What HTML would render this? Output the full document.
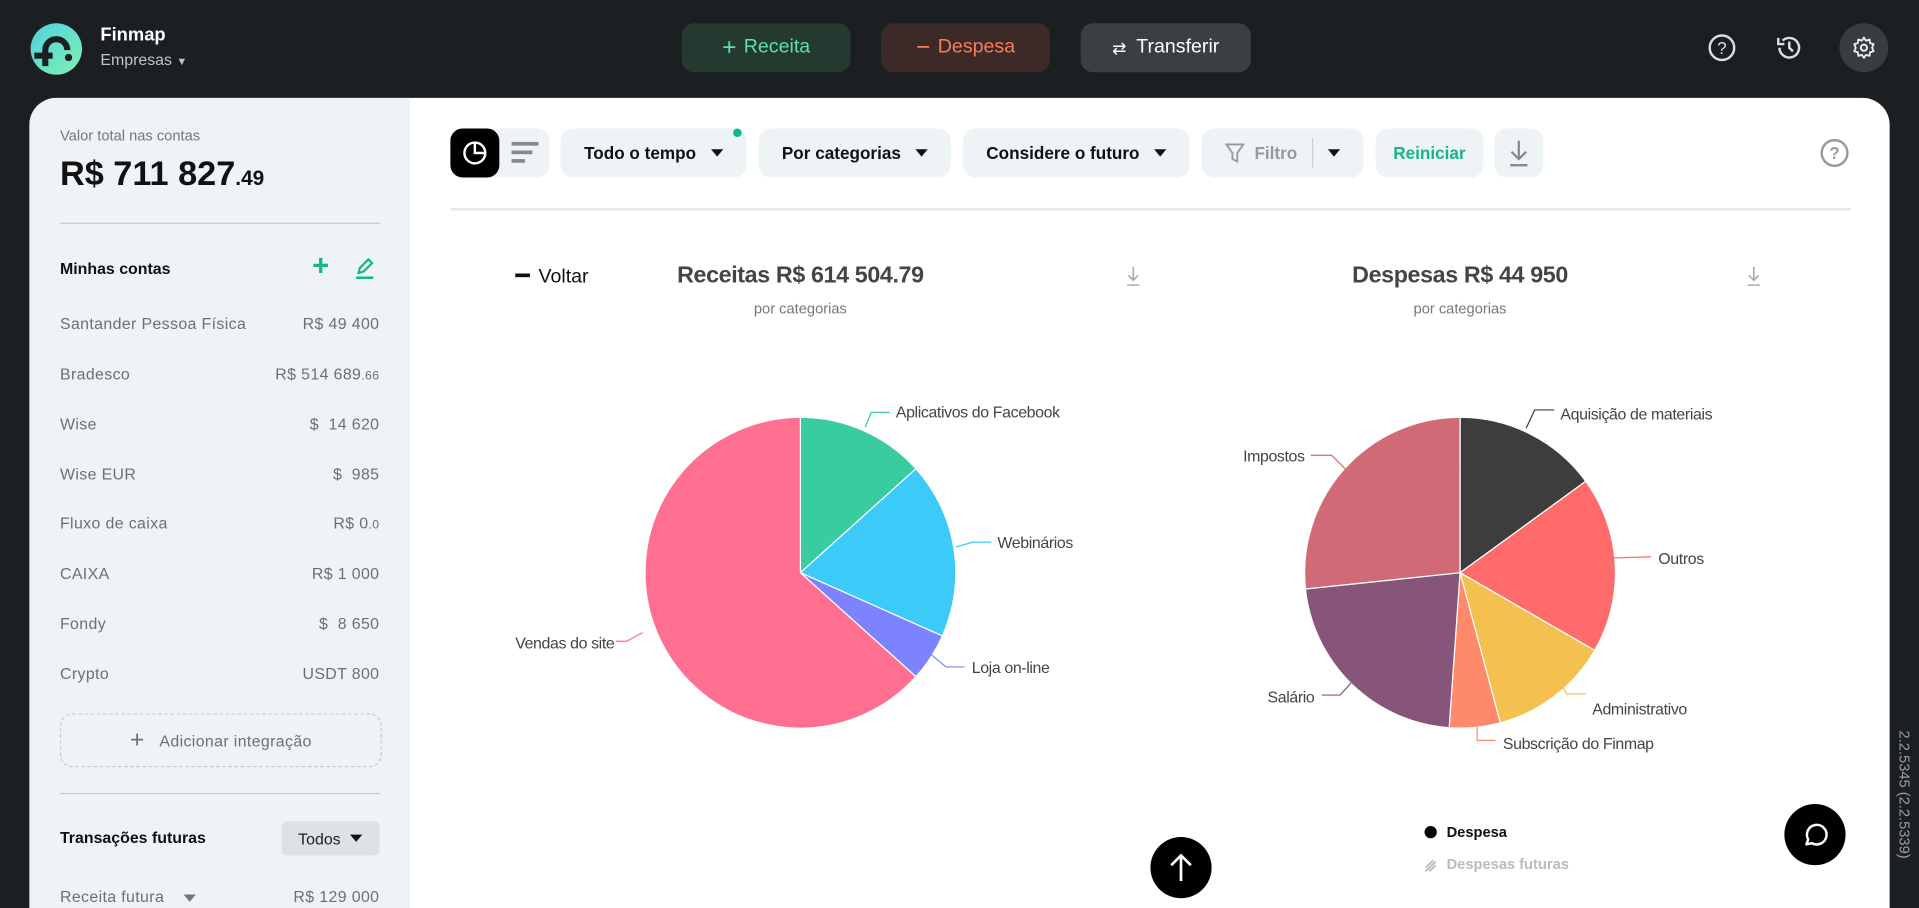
<!DOCTYPE html>
<html><head><meta charset="utf-8"><style>
*{margin:0;padding:0;box-sizing:border-box}
html,body{width:1919px;height:908px;overflow:hidden;background:#1b1f22;font-family:"Liberation Sans",Arial,sans-serif}
#w{position:absolute;left:0;top:0;width:1568px;height:742px;transform:scale(1.22385,1.22372);transform-origin:0 0;background:#1b1f22;overflow:hidden}
.a{position:absolute}
.btn{position:absolute;top:19px;height:40px;border-radius:10px;font-size:16px;display:flex;align-items:center;justify-content:center}
.tb{position:absolute;top:105px;height:40px;border-radius:10px;background:#eef3f6;font-size:14px;font-weight:bold;color:#111;display:flex;align-items:center;justify-content:center;gap:12px}
.tri{width:0;height:0;border-left:5px solid transparent;border-right:5px solid transparent;border-top:6px solid #111;display:inline-block}
.row{position:absolute;left:49px;width:261px;font-size:13px;color:#6b7075;display:flex;justify-content:space-between;letter-spacing:.3px}
</style></head><body><div id="w">
<svg class="a" style="left:24px;top:18px" width="44" height="44" viewBox="0 0 44 44"><defs><linearGradient id="g" x1="0" y1="0" x2="1" y2="1"><stop offset="0" stop-color="#4fd1e0"/><stop offset="1" stop-color="#7ff0b0"/></linearGradient></defs><circle cx="22" cy="22" r="21" fill="url(#g)"/><path d="M13 36V23a9 9 0 0 1 18 0" stroke="#1b1f22" stroke-width="5" fill="none"/><rect x="4" y="25" width="15" height="5" fill="#1b1f22"/><circle cx="32" cy="29" r="3" fill="#1b1f22"/></svg>
<div class="a" style="left:82px;top:20px;color:#fff;font-weight:bold;font-size:15px">Finmap</div>
<div class="a" style="left:82px;top:41px;color:#bfc3c6;font-size:13px">Empresas <span style="font-size:9px">▼</span></div>
<div class="btn" style="left:557px;width:138px;background:#24392f;color:#5fe0a6"><span style="font-size:20px;margin-right:6px">+</span>Receita</div>
<div class="btn" style="left:720px;width:138px;background:#3b2a27;color:#ff7a5c"><span style="font-size:20px;margin-right:6px">−</span>Despesa</div>
<div class="btn" style="left:883px;width:139px;background:#3c3f42;color:#fff"><span style="font-size:14px;margin-right:8px">⇄</span>Transferir</div>
<svg class="a" style="left:1395px;top:27px" width="24" height="24" viewBox="0 0 24 24"><circle cx="12" cy="12" r="10" stroke="#ddd" stroke-width="2" fill="none"/><text x="12" y="17" text-anchor="middle" font-size="14" fill="#ddd" font-family="Liberation Sans">?</text></svg>
<svg class="a" style="left:1450px;top:27px" width="24" height="24" viewBox="0 0 24 24"><path d="M4 12a8 8 0 1 0 2.5-5.8" stroke="#ddd" stroke-width="2" fill="none"/><path d="M3 4v5h5" stroke="#ddd" stroke-width="2" fill="none"/><path d="M12 7v5l3 3" stroke="#ddd" stroke-width="2" fill="none"/></svg>
<div class="a" style="left:1503px;top:19px;width:40px;height:40px;border-radius:50%;background:#3a3d40"></div>
<svg class="a" style="left:1513px;top:29px" width="20" height="20" viewBox="0 0 24 24"><circle cx="12" cy="12" r="3" stroke="#eee" stroke-width="2" fill="none"/><path d="M12 2l2 3 3.5-1 .5 3.5 3.5 1-1.5 3.5 1.5 3.5-3.5 1-.5 3.5-3.5-1-2 3-2-3-3.5 1-.5-3.5-3.5-1L4 12 2.5 8.5l3.5-1L6.5 4 10 5z" stroke="#eee" stroke-width="1.8" fill="none" stroke-linejoin="round"/></svg>
<div class="a" style="left:24px;top:80px;width:1520px;height:662px;background:#fff;border-radius:22px 22px 0 0;overflow:hidden">
<div class="a" style="left:0;top:0;width:311px;height:662px;background:#edf3f6"></div></div>
<div class="a" style="left:49px;top:104px;font-size:12px;color:#777">Valor total nas contas</div>
<div class="a" style="left:49px;top:126px;font-size:28px;font-weight:bold;color:#111">R$ 711 827<span style="font-size:17px">.49</span></div>
<div class="a" style="left:49px;top:182px;width:262px;height:1px;background:#c9ccce"></div>
<div class="a" style="left:49px;top:212px;font-size:13px;font-weight:bold;color:#111">Minhas contas</div>
<div class="a" style="left:255px;top:204px;font-size:24px;color:#17b58a;font-weight:bold">+</div>
<svg class="a" style="left:289px;top:209px" width="18" height="20" viewBox="0 0 18 20"><path d="M4 14l1-4 7-7 3 3-7 7z" stroke="#17b58a" stroke-width="1.8" fill="none"/><path d="M2 18h14" stroke="#17b58a" stroke-width="2"/></svg>
<div class="row" style="top:257px"><span>Santander Pessoa Física</span><span>R$ 49 400</span></div>
<div class="row" style="top:298px"><span>Bradesco</span><span>R$ 514 689<span style="font-size:10px">.66</span></span></div>
<div class="row" style="top:339px"><span>Wise</span><span>$&nbsp; 14 620</span></div>
<div class="row" style="top:380px"><span>Wise EUR</span><span>$&nbsp; 985</span></div>
<div class="row" style="top:420px"><span>Fluxo de caixa</span><span>R$ 0<span style="font-size:10px">.0</span></span></div>
<div class="row" style="top:461px"><span>CAIXA</span><span>R$ 1 000</span></div>
<div class="row" style="top:502px"><span>Fondy</span><span>$&nbsp; 8 650</span></div>
<div class="row" style="top:543px"><span>Crypto</span><span>USDT 800</span></div>
<div class="a" style="left:49px;top:583px;width:263px;height:44px;border:1px dashed #c9ccce;border-radius:10px;font-size:13px;color:#6b7075;display:flex;align-items:center;justify-content:center;letter-spacing:.3px"><span style="font-size:20px;margin-right:12px">+</span>Adicionar integração</div>
<div class="a" style="left:49px;top:648px;width:262px;height:1px;background:#c9ccce"></div>
<div class="a" style="left:49px;top:677px;font-size:13px;font-weight:bold;color:#111">Transações futuras</div>
<div class="a" style="left:230px;top:671px;width:80px;height:28px;background:#dde2e6;border-radius:4px;font-size:13px;color:#222;display:flex;align-items:center;justify-content:center;gap:8px">Todos <span class="tri"></span></div>
<div class="row" style="top:725px"><span>Receita futura &nbsp;&nbsp; <span class="tri" style="border-top-color:#777"></span></span><span>R$ 129 000</span></div>
<div class="a" style="left:368px;top:105px;width:81px;height:40px;background:#eef3f6;border-radius:10px"></div>
<div class="a" style="left:368px;top:105px;width:40px;height:40px;background:#000;border-radius:10px"></div>
<svg class="a" style="left:377px;top:114px" width="22" height="22" viewBox="0 0 22 22"><circle cx="11" cy="11" r="8.5" stroke="#fff" stroke-width="2" fill="none"/><path d="M11 3v8h8" stroke="#fff" stroke-width="2" fill="none"/></svg>
<div class="a" style="left:418px;top:116px;width:22px;height:2.5px;background:#888"></div>
<div class="a" style="left:418px;top:123px;width:17px;height:2.5px;background:#888"></div>
<div class="a" style="left:418px;top:130px;width:11px;height:2.5px;background:#888"></div>
<div class="tb" style="left:458px;width:152px">Todo o tempo <span class="tri"></span></div>
<div class="a" style="left:599px;top:105px;width:7px;height:7px;border-radius:50%;background:#17b58a"></div>
<div class="tb" style="left:620px;width:157px">Por categorias <span class="tri"></span></div>
<div class="tb" style="left:787px;width:185px">Considere o futuro <span class="tri"></span></div>
<div class="tb" style="left:982px;width:132px;color:#999;font-weight:normal;gap:8px"><svg width="16" height="18" viewBox="0 0 16 18"><path d="M1 2h14l-5 7v7l-4 -2V9z" stroke="#999" stroke-width="1.5" fill="none"/></svg><b style="color:#999">Filtro</b><span style="width:1px;height:24px;background:#ccd;margin:0 4px"></span><span class="tri"></span></div>
<div class="tb" style="left:1124px;width:88px;color:#17b58a">Reiniciar</div>
<div class="tb" style="left:1221px;width:40px"><svg width="18" height="24" viewBox="0 0 18 24"><path d="M9 2v15M3 11l6 6 6-6" stroke="#888" stroke-width="1.8" fill="none"/><path d="M2 22h14" stroke="#888" stroke-width="2"/></svg></div>
<svg class="a" style="left:1487px;top:113px" width="24" height="24" viewBox="0 0 24 24"><circle cx="12" cy="12" r="10.5" stroke="#999" stroke-width="2" fill="none"/><text x="12" y="17" text-anchor="middle" font-size="14" fill="#999" font-family="Liberation Sans" font-weight="bold">?</text></svg>
<div class="a" style="left:368px;top:170px;width:1144px;height:2px;background:#e6e8ea"></div>
<svg class="a" style="left:0;top:0" width="1568" height="742" viewBox="0 0 1568 742" font-family="Liberation Sans">
<path d="M421 225h12" stroke="#111" stroke-width="3"/>
<text x="440" y="231" font-size="16" fill="#111">Voltar</text>
<text x="654" y="231" font-size="19" font-weight="bold" fill="#444" text-anchor="middle" letter-spacing="-0.3">Receitas R$ 614 504.79</text>
<text x="654" y="256" font-size="12" fill="#777" text-anchor="middle">por categorias</text>
<text x="1193" y="231" font-size="19" font-weight="bold" fill="#444" text-anchor="middle" letter-spacing="-0.3">Despesas R$ 44 950</text>
<text x="1193" y="256" font-size="12" fill="#777" text-anchor="middle">por categorias</text>
<g stroke="#aaa" stroke-width="1.3" fill="none"><path d="M926 218v11M922 225l4 4 4-4M921 233h10"/><path d="M1433 218v11M1429 225l4 4 4-4M1428 233h10"/></g>
<g stroke="#fff" stroke-width="1">
<path d="M654 468L654 341A127 127 0 0 1 748.4 383Z" fill="#38cca0"/>
<path d="M654 468L748.4 383A127 127 0 0 1 770 519.7Z" fill="#3ccbf8"/>
<path d="M654 468L770 519.7A127 127 0 0 1 748.4 553Z" fill="#7d83ff"/>
<path d="M654 468L748.4 553A127 127 0 1 1 654 341Z" fill="#ff7090"/>
<path d="M1193 468L1193 341A127 127 0 0 1 1295.7 393.3Z" fill="#3d3d3d"/>
<path d="M1193 468L1295.7 393.3A127 127 0 0 1 1303 531.5Z" fill="#ff6b6b"/>
<path d="M1193 468L1303 531.5A127 127 0 0 1 1225.9 590.7Z" fill="#f4c150"/>
<path d="M1193 468L1225.9 590.7A127 127 0 0 1 1184.1 594.7Z" fill="#ff8a6b"/>
<path d="M1193 468L1184.1 594.7A127 127 0 0 1 1066.7 481.3Z" fill="#87557a"/>
<path d="M1193 468L1066.7 481.3A127 127 0 0 1 1193 341Z" fill="#d06a76"/>
</g>
<g fill="none" stroke-width="1">
<path d="M707 349L712 337H727" stroke="#38cca0"/>
<path d="M781 447L795 443H810" stroke="#3ccbf8"/>
<path d="M761 535L773 545H788" stroke="#7d83ff"/>
<path d="M525 517L512 524H503" stroke="#ff7090"/>
<path d="M1247 350L1254 335H1270" stroke="#3d3d3d"/>
<path d="M1318 456L1349 455" stroke="#ff6b6b"/>
<path d="M1272 553L1280 567H1296" stroke="#f4c150"/>
<path d="M1207 593V605H1222" stroke="#ff8a6b"/>
<path d="M1104 558L1095 568H1080" stroke="#87557a"/>
<path d="M1100 384L1088 372H1071" stroke="#d06a76"/>
</g>
<g font-size="13" fill="#444" letter-spacing="-0.3">
<text x="732" y="341">Aplicativos do Facebook</text>
<text x="815" y="448">Webinários</text>
<text x="794" y="550">Loja on-line</text>
<text x="502" y="530" text-anchor="end">Vendas do site</text>
<text x="1275" y="343">Aquisição de materiais</text>
<text x="1355" y="461">Outros</text>
<text x="1301" y="584">Administrativo</text>
<text x="1228" y="612">Subscrição do Finmap</text>
<text x="1074" y="574" text-anchor="end">Salário</text>
<text x="1066" y="377" text-anchor="end">Impostos</text>
</g>
<circle cx="1169" cy="680" r="5" fill="#000"/>
<text x="1182" y="684" font-size="12" font-weight="bold" fill="#111">Despesa</text>
<g stroke="#bbb" stroke-width="1.5"><path d="M1165 709l6-6M1165 712l8-8M1168 712l5-5"/></g>
<text x="1182" y="710" font-size="12" font-weight="bold" fill="#bbb">Despesas futuras</text>
<circle cx="965" cy="709" r="25" fill="#000"/>
<path d="M965 720V699M957 707l8-8 8 8" stroke="#fff" stroke-width="2.2" fill="none"/>
<circle cx="1483" cy="682" r="25" fill="#000"/>
<path d="M1476 690l1.5-4a8 8 0 1 1 3 3z" stroke="#fff" stroke-width="2" fill="none" stroke-linejoin="round"/>
<text x="0" y="0" font-size="12" fill="#9a9ea2" transform="translate(1552,597) rotate(90)">2.2.5345 (2.2.5339)</text>
</svg>
</div></body></html>
